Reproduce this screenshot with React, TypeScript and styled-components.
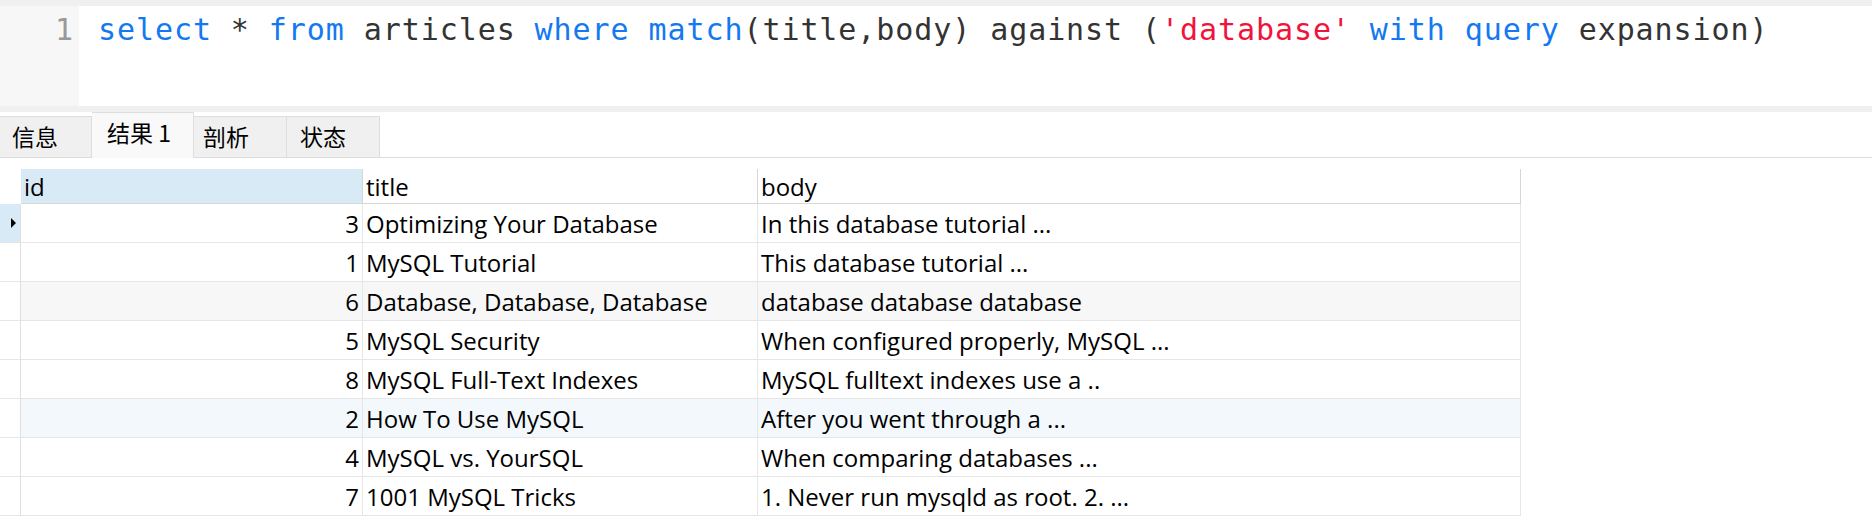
import React from "react";
import styled, { createGlobalStyle } from "styled-components";

const GlobalStyle = createGlobalStyle`
  html, body { margin: 0; padding: 0; background: #ffffff; }
  body { width: 1872px; height: 529px; overflow: hidden; }
`;

const Page = styled.div`
  display: flex;
  flex-direction: column;
  width: 1872px;
  height: 529px;
  background: #ffffff;
`;

const Strip = styled.div<{ $h: number }>`
  height: ${(p) => p.$h}px;
  background: #f0f0f0;
  flex: none;
`;

const Editor = styled.div`
  display: flex;
  height: 100px;
  flex: none;
  background: #ffffff;
`;

const Gutter = styled.div`
  width: 79px;
  background: #f7f7f7;
  box-sizing: border-box;
  padding: 6px 6px 0 0;
  text-align: right;
  font-family: "DejaVu Sans Mono", monospace;
  font-size: 30px;
  line-height: 36px;
  color: #999999;
`;

const Code = styled.div`
  flex: 1;
  padding: 6px 0 0 19px;
  font-family: "DejaVu Sans Mono", monospace;
  font-size: 30px;
  letter-spacing: 0.92px;
  line-height: 36px;
  color: #333333;
  white-space: pre;
`;

const Tok = styled.span<{ $kind: "kw" | "str" | "id" }>`
  color: ${(p) => (p.$kind === "kw" ? "#1479f0" : p.$kind === "str" ? "#f0143c" : "#333333")};
`;

const TabBar = styled.div`
  display: flex;
  align-items: flex-end;
  height: 45px;
  flex: none;
  border-bottom: 1px solid #dcdcdc;
  background: #ffffff;
`;

const Tab = styled.div<{ $w: number; $pad: number; $active?: boolean }>`
  box-sizing: border-box;
  width: ${(p) => p.$w}px;
  height: ${(p) => (p.$active ? 46 : 41)}px;
  padding-left: ${(p) => p.$pad}px;
  padding-bottom: ${(p) => (p.$active ? 7 : 3)}px;
  margin-bottom: ${(p) => (p.$active ? -1 : 0)}px;
  display: flex;
  align-items: center;
  background: ${(p) => (p.$active ? "#f9f9f9" : "#f0f0f0")};
  border: 1px solid #dedede;
  border-bottom: none;
  border-left: none;
  font-family: "Noto Sans CJK SC", "Noto Sans", sans-serif;
  font-size: 23px;
  color: #000000;
  white-space: pre;
`;

const GridWrap = styled.div`
  padding-top: 11px;
`;

const Grid = styled.div`
  display: grid;
  grid-template-columns: 21px 342px 395px 763px;
  width: 1521px;
  font-family: "Open Sans", "Noto Sans", sans-serif;
  font-size: 24px;
  color: #000000;
`;

const HeadCell = styled.div<{ $blue?: boolean; $blank?: boolean }>`
  box-sizing: border-box;
  height: 35px;
  display: flex;
  align-items: center;
  padding-left: 3px;
  background: ${(p) => (p.$blue ? "#d9eaf7" : "#ffffff")};
  border-bottom: ${(p) => (p.$blank ? "none" : "1px solid #d6d6d6")};
  border-right: ${(p) => (p.$blank ? "1px solid transparent" : "1px solid #d6d6d6")};
  white-space: nowrap;
`;

const Indicator = styled.div<{ $sel?: boolean }>`
  box-sizing: border-box;
  height: 39px;
  display: flex;
  align-items: center;
  padding-left: 11px;
  background: ${(p) => (p.$sel ? "#d9eaf7" : "#ffffff")};
  border-bottom: 1px solid #e6e6e6;
  border-right: 1px solid #e0e0e0;
`;

const Arrow = styled.span`
  width: 0;
  height: 0;
  border-top: 5px solid transparent;
  border-bottom: 5px solid transparent;
  border-left: 5px solid #000000;
`;

const Cell = styled.div<{ $bg: string; $right?: boolean }>`
  box-sizing: border-box;
  height: 39px;
  display: flex;
  align-items: center;
  justify-content: ${(p) => (p.$right ? "flex-end" : "flex-start")};
  padding: 0 3px;
  background: ${(p) => p.$bg};
  border-bottom: 1px solid #e6e6e6;
  border-right: 1px solid #e6e6e6;
  white-space: pre;
  overflow: hidden;
`;

const rows: [number, string, string][] = [
  [3, "Optimizing Your Database", "In this database tutorial ..."],
  [1, "MySQL Tutorial", "This database tutorial ..."],
  [6, "Database, Database, Database", "database database database"],
  [5, "MySQL Security", "When configured properly, MySQL ..."],
  [8, "MySQL Full-Text Indexes", "MySQL fulltext indexes use a .."],
  [2, "How To Use MySQL", "After you went through a ..."],
  [4, "MySQL vs. YourSQL", "When comparing databases ..."],
  [7, "1001 MySQL Tricks", "1. Never run mysqld as root. 2. ..."],
];

const rowBg = (i: number) => (i === 2 ? "#f7f7f7" : i === 5 ? "#f3f8fd" : "#ffffff");

const code: [string, "kw" | "str" | "id"][] = [
  ["select", "kw"],
  [" * ", "id"],
  ["from", "kw"],
  [" articles ", "id"],
  ["where", "kw"],
  [" ", "id"],
  ["match", "kw"],
  ["(title,body) against (", "id"],
  ["'database'", "str"],
  [" ", "id"],
  ["with", "kw"],
  [" ", "id"],
  ["query", "kw"],
  [" expansion)", "id"],
];

export default function App() {
  return (
    <>
      <GlobalStyle />
      <Page>
        <Strip $h={6} />
        <Editor>
          <Gutter>1</Gutter>
          <Code>
            {code.map(([t, k], i) => (
              <Tok key={i} $kind={k}>
                {t}
              </Tok>
            ))}
          </Code>
        </Editor>
        <Strip $h={6} />
        <TabBar>
          <Tab $w={92} $pad={12}>信息</Tab>
          <Tab $w={102} $pad={15} $active>结果 1</Tab>
          <Tab $w={93} $pad={9}>剖析</Tab>
          <Tab $w={93} $pad={13}>状态</Tab>
        </TabBar>
        <GridWrap>
          <Grid>
            <HeadCell $blank />
            <HeadCell $blue>id</HeadCell>
            <HeadCell>title</HeadCell>
            <HeadCell>body</HeadCell>
            {rows.map(([id, title, body], i) => (
              <React.Fragment key={id}>
                <Indicator $sel={i === 0}>{i === 0 && <Arrow />}</Indicator>
                <Cell $bg={rowBg(i)} $right>
                  {id}
                </Cell>
                <Cell $bg={rowBg(i)}>{title}</Cell>
                <Cell $bg={rowBg(i)}>{body}</Cell>
              </React.Fragment>
            ))}
          </Grid>
        </GridWrap>
      </Page>
    </>
  );
}
